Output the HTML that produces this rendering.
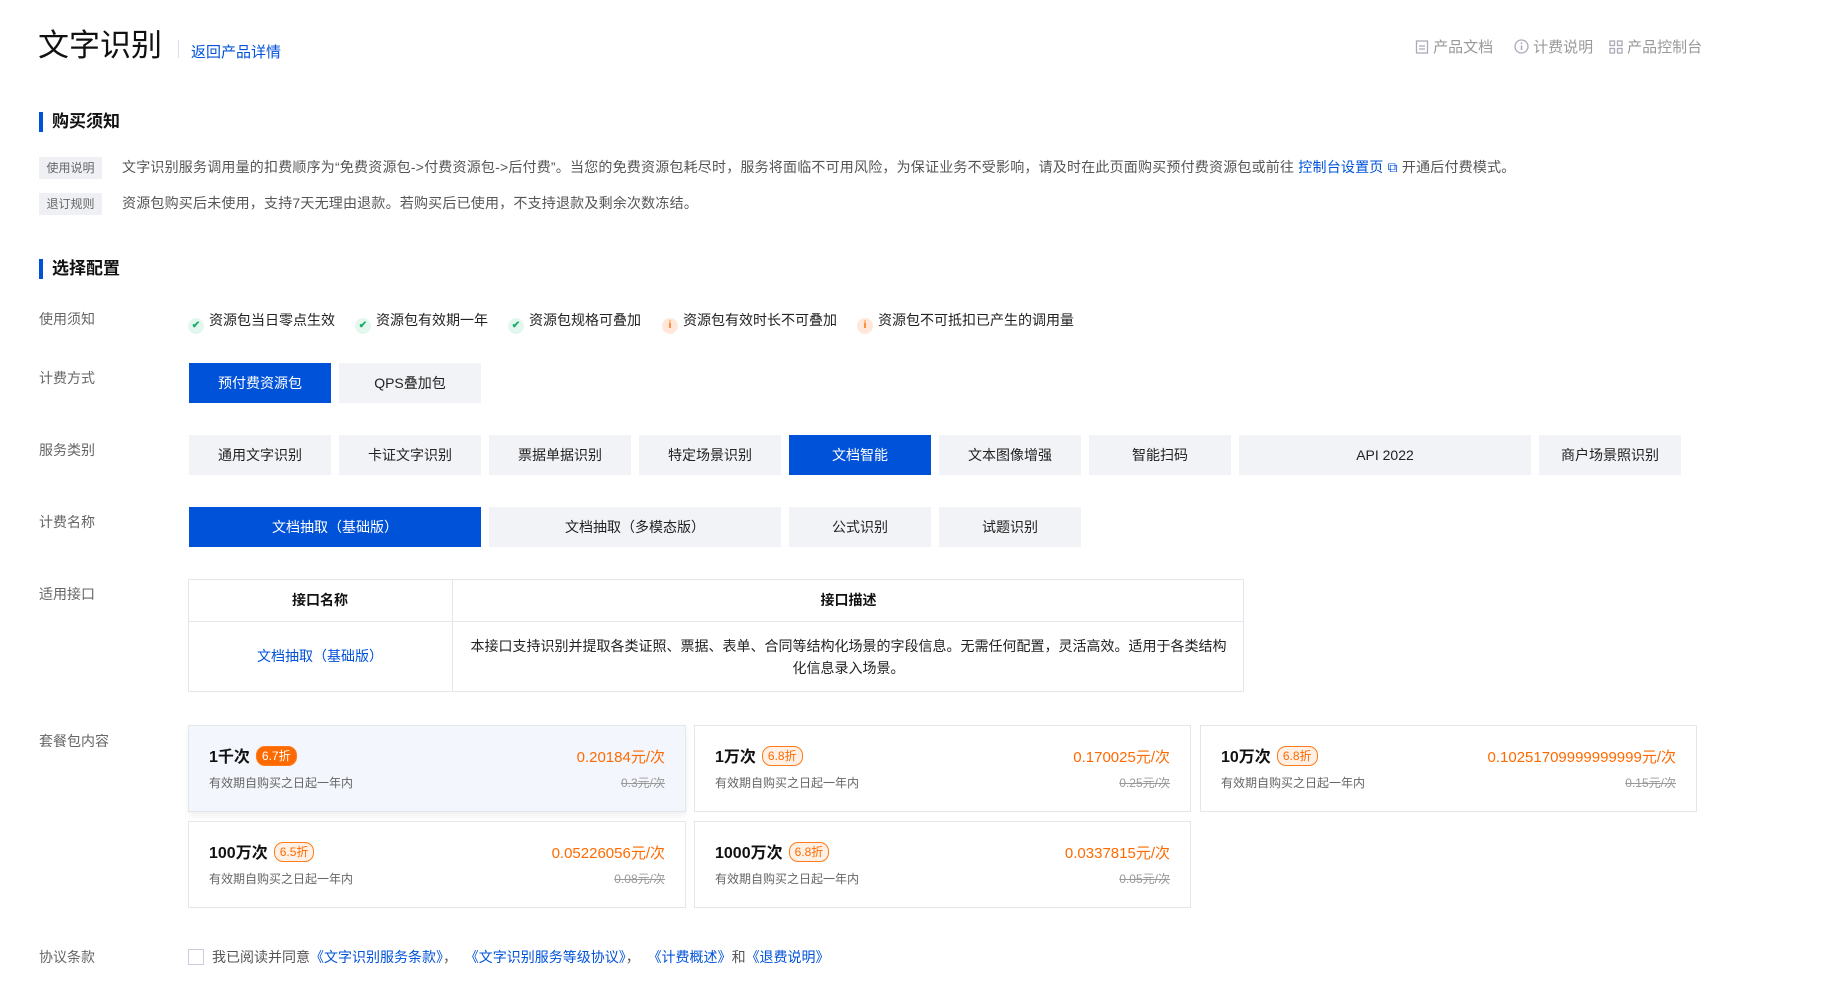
<!DOCTYPE html>
<html><head><meta charset="utf-8"><style>
*{margin:0;padding:0;box-sizing:border-box}
body{width:1836px;height:1005px;background:#fff;font-family:"Liberation Sans","Noto Sans CJK SC",sans-serif;color:#333;position:relative;overflow:hidden}
.a{position:absolute;white-space:nowrap}
.lbl{position:absolute;left:39px;font-size:14px;color:#666;line-height:20px}
.btn{position:absolute;height:40px;line-height:40px;text-align:center;font-size:14px;background:#f2f3f7;color:#222}
.btn.on{background:#0052d9;color:#fff}
.h{position:absolute;left:39px;font-size:17px;font-weight:bold;color:#111;border-left:4px solid #0052d9;padding-left:9px;line-height:20px}
.tag{position:absolute;left:39px;width:63px;height:22px;line-height:22px;text-align:center;background:#eef0f4;color:#666;font-size:12px}
.txt{position:absolute;left:122px;font-size:14px;color:#555;line-height:20px;white-space:nowrap;letter-spacing:0.2px}
.note{position:absolute;top:310px;font-size:14px;color:#222;line-height:20px;white-space:nowrap}
.ic{display:inline-block;width:16px;height:16px;border-radius:50%;vertical-align:-3px;margin-right:5px;text-align:center;font-size:10px;line-height:16px;font-weight:bold}
.ok{background:#e3f7ee;color:#1aad6a}
.wn{background:#ffe8d9;color:#ff6a00}
.card{position:absolute;border:1px solid #e3e6eb;background:#fff}
.card.sel{background:#f3f6fc;box-shadow:0 4px 6px rgba(0,0,0,.06)}
.ct{position:absolute;left:20px;top:20px;font-size:16px;font-weight:bold;color:#111;line-height:24px}
.badge{display:inline-block;font-size:12px;font-weight:normal;line-height:18px;padding:0 5px;border-radius:9px;border:1px solid #ff7a1a;color:#ff6a00;background:#fff1e6;margin-left:6px;vertical-align:2px}
.badge.f{background:#ff6a00;color:#fff}
.cs{position:absolute;left:20px;top:48px;font-size:12px;color:#666}
.cp{position:absolute;right:20px;top:21px;font-size:15px;color:#ff6a00;line-height:22px}
.co{position:absolute;right:20px;top:48px;font-size:12px;color:#999;text-decoration:line-through}
a{color:#0052d9;text-decoration:none}
</style></head><body>
<div class="a" style="left:38px;top:26px;font-size:31px;color:#111;line-height:40px">文字识别</div>
<div class="a" style="left:178px;top:40px;width:1px;height:18px;background:#dde"></div>
<div class="a" style="left:191px;top:41px;font-size:15px;color:#0052d9">返回产品详情</div>

<div class="a" style="left:1415px;top:39px;font-size:15px;color:#999;line-height:18px">
<svg width="14" height="14" viewBox="0 0 14 14" style="vertical-align:-2px"><rect x="1.5" y="1" width="11" height="12" fill="none" stroke="#aab" stroke-width="1.3"/><line x1="4" y1="6" x2="10" y2="6" stroke="#aab" stroke-width="1.3"/><line x1="4" y1="9" x2="10" y2="9" stroke="#aab" stroke-width="1.3"/></svg> 产品文档</div>
<div class="a" style="left:1514px;top:39px;font-size:15px;color:#999;line-height:18px">
<svg width="15" height="15" viewBox="0 0 15 15" style="vertical-align:-2px"><circle cx="7.5" cy="7.5" r="6.5" fill="none" stroke="#aab" stroke-width="1.3"/><line x1="7.5" y1="6.5" x2="7.5" y2="11" stroke="#aab" stroke-width="1.5"/><circle cx="7.5" cy="4.3" r=".9" fill="#aab"/></svg> 计费说明</div>
<div class="a" style="left:1609px;top:39px;font-size:15px;color:#999;line-height:18px">
<svg width="14" height="14" viewBox="0 0 14 14" style="vertical-align:-2px"><g fill="none" stroke="#aab" stroke-width="1.3"><rect x="1" y="1" width="4.5" height="4.5"/><rect x="8.5" y="1" width="4.5" height="4.5"/><rect x="1" y="8.5" width="4.5" height="4.5"/><rect x="8.5" y="8.5" width="4.5" height="4.5"/></g></svg> 产品控制台</div>

<div class="h" style="top:112px">购买须知</div>
<div class="tag" style="top:157px">使用说明</div>
<div class="txt" style="top:157px">文字识别服务调用量的扣费顺序为“免费资源包->付费资源包->后付费”。当您的免费资源包耗尽时，服务将面临不可用风险，为保证业务不受影响，请及时在此页面购买预付费资源包或前往 <a>控制台设置页 ⧉</a> 开通后付费模式。</div>
<div class="tag" style="top:193px">退订规则</div>
<div class="txt" style="top:193px">资源包购买后未使用，支持7天无理由退款。若购买后已使用，不支持退款及剩余次数冻结。</div>

<div class="h" style="top:259px">选择配置</div>

<div class="lbl" style="top:309px">使用须知</div>
<div class="note" style="left:188px"><span class="ic ok">✔</span>资源包当日零点生效</div>
<div class="note" style="left:355px"><span class="ic ok">✔</span>资源包有效期一年</div>
<div class="note" style="left:508px"><span class="ic ok">✔</span>资源包规格可叠加</div>
<div class="note" style="left:662px"><span class="ic wn">i</span>资源包有效时长不可叠加</div>
<div class="note" style="left:857px"><span class="ic wn">i</span>资源包不可抵扣已产生的调用量</div>

<div class="lbl" style="top:368px">计费方式</div>
<div class="btn on" style="left:189px;top:363px;width:142px">预付费资源包</div>
<div class="btn" style="left:339px;top:363px;width:142px">QPS叠加包</div>

<div class="lbl" style="top:440px">服务类别</div>
<div class="btn" style="left:189px;top:435px;width:142px">通用文字识别</div>
<div class="btn" style="left:339px;top:435px;width:142px">卡证文字识别</div>
<div class="btn" style="left:489px;top:435px;width:142px">票据单据识别</div>
<div class="btn" style="left:639px;top:435px;width:142px">特定场景识别</div>
<div class="btn on" style="left:789px;top:435px;width:142px">文档智能</div>
<div class="btn" style="left:939px;top:435px;width:142px">文本图像增强</div>
<div class="btn" style="left:1089px;top:435px;width:142px">智能扫码</div>
<div class="btn" style="left:1239px;top:435px;width:292px">API 2022</div>
<div class="btn" style="left:1539px;top:435px;width:142px">商户场景照识别</div>

<div class="lbl" style="top:512px">计费名称</div>
<div class="btn on" style="left:189px;top:507px;width:292px">文档抽取（基础版）</div>
<div class="btn" style="left:489px;top:507px;width:292px">文档抽取（多模态版）</div>
<div class="btn" style="left:789px;top:507px;width:142px">公式识别</div>
<div class="btn" style="left:939px;top:507px;width:142px">试题识别</div>

<div class="lbl" style="top:584px">适用接口</div>
<div class="a" style="left:188px;top:579px;width:1056px;height:113px;border:1px solid #e3e6eb"></div>
<div class="a" style="left:188px;top:621px;width:1056px;height:1px;background:#e3e6eb"></div>
<div class="a" style="left:452px;top:579px;width:1px;height:113px;background:#e3e6eb"></div>
<div class="a" style="left:188px;top:590px;width:264px;text-align:center;font-size:14px;font-weight:bold;color:#111">接口名称</div>
<div class="a" style="left:453px;top:590px;width:791px;text-align:center;font-size:14px;font-weight:bold;color:#111">接口描述</div>
<div class="a" style="left:188px;top:646px;width:264px;text-align:center;font-size:14px;color:#0052d9">文档抽取（基础版）</div>
<div class="a" style="left:470px;top:635px;width:757px;text-align:center;font-size:14px;color:#222;line-height:22px;white-space:normal">本接口支持识别并提取各类证照、票据、表单、合同等结构化场景的字段信息。无需任何配置，灵活高效。适用于各类结构化信息录入场景。</div>

<div class="lbl" style="top:731px">套餐包内容</div>
<div class="card sel" style="left:188px;top:725px;width:498px;height:87px"><div class="ct">1千次<span class="badge f">6.7折</span></div><div class="cs">有效期自购买之日起一年内</div><div class="cp">0.20184元/次</div><div class="co">0.3元/次</div></div>
<div class="card" style="left:694px;top:725px;width:497px;height:87px"><div class="ct">1万次<span class="badge">6.8折</span></div><div class="cs">有效期自购买之日起一年内</div><div class="cp">0.170025元/次</div><div class="co">0.25元/次</div></div>
<div class="card" style="left:1200px;top:725px;width:497px;height:87px"><div class="ct">10万次<span class="badge">6.8折</span></div><div class="cs">有效期自购买之日起一年内</div><div class="cp">0.10251709999999999元/次</div><div class="co">0.15元/次</div></div>
<div class="card" style="left:188px;top:821px;width:498px;height:87px"><div class="ct">100万次<span class="badge">6.5折</span></div><div class="cs">有效期自购买之日起一年内</div><div class="cp">0.05226056元/次</div><div class="co">0.08元/次</div></div>
<div class="card" style="left:694px;top:821px;width:497px;height:87px"><div class="ct">1000万次<span class="badge">6.8折</span></div><div class="cs">有效期自购买之日起一年内</div><div class="cp">0.0337815元/次</div><div class="co">0.05元/次</div></div>

<div class="lbl" style="top:947px">协议条款</div>
<div class="a" style="left:188px;top:949px;width:16px;height:16px;border:1px solid #ccd"></div>
<div class="a" style="left:212px;top:947px;font-size:14px;color:#555;line-height:20px">我已阅读并同意<a>《文字识别服务条款》</a>，&nbsp;&nbsp;<a>《文字识别服务等级协议》</a>，&nbsp;&nbsp;<a>《计费概述》</a>和<a>《退费说明》</a></div>
</body></html>
